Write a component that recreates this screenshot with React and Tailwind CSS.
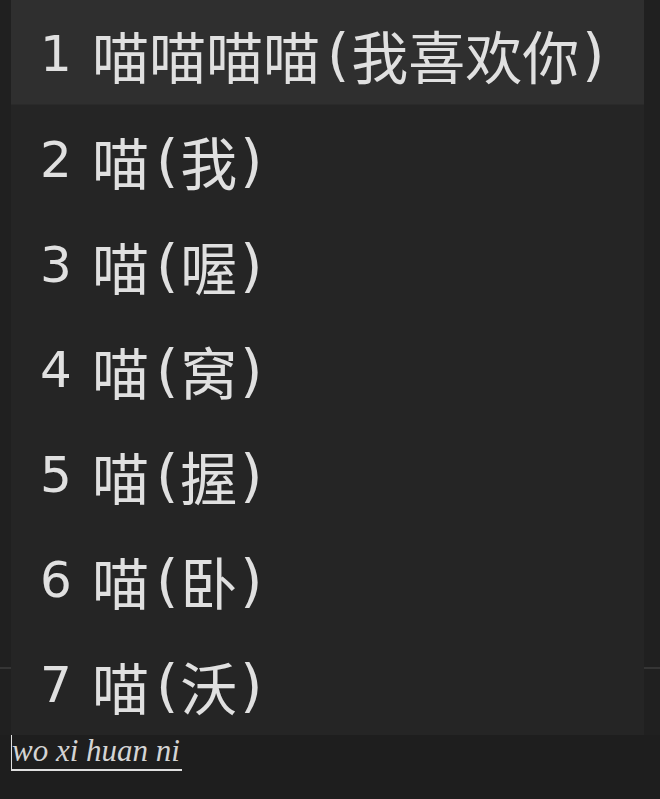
import React from "react";

const candidates = [
  { n: 1, head: "喵喵喵喵", hint: "我喜欢你" },
  { n: 2, head: "喵", hint: "我" },
  { n: 3, head: "喵", hint: "喔" },
  { n: 4, head: "喵", hint: "窝" },
  { n: 5, head: "喵", hint: "握" },
  { n: 6, head: "喵", hint: "卧" },
  { n: 7, head: "喵", hint: "沃" },
];

function SideStrip({ width }) {
  return (
    <div className={`${width} flex flex-col`}>
      <div className="h-[667px] bg-[#202020]" />
      <div className="h-[2px] bg-[#353535]" />
      <div className="flex-1 bg-[#202020]" />
    </div>
  );
}

function CandidateRow({ item, active }) {
  return (
    <div
      className={`h-[105px] flex items-center pl-[29px] pt-[5px] text-[#e0e0e0] ${
        active ? "bg-[#2f2f2f] border-b border-[#2a2a2a]" : "bg-[#252525]"
      }`}
    >
      <span className="w-[52px] text-[50px] font-['DejaVu_Sans',sans-serif]">{item.n}</span>
      <span className="text-[57px] leading-none font-['Noto_Sans_CJK_SC',sans-serif] flex items-center">
        {item.head}
        <span className="ml-[7px] mr-[2px] font-['DejaVu_Sans',sans-serif]">(</span>
        {item.hint}
        <span className="ml-[3px] font-['DejaVu_Sans',sans-serif]">)</span>
      </span>
    </div>
  );
}

export default function App() {
  return (
    <div className="w-[660px] h-[799px] bg-[#1e1e1e] overflow-hidden">
      {/* candidate window over the editor */}
      <div className="flex h-[735px]">
        <SideStrip width="w-[11px]" />
        <div className="w-[633px] flex flex-col">
          {candidates.map((c, i) => (
            <CandidateRow key={c.n} item={c} active={i === 0} />
          ))}
        </div>
        <SideStrip width="flex-1" />
      </div>

      {/* composition string */}
      <div className="pl-[11px]">
        <span className="inline-block border-l border-b-2 border-[#e0e0e0] h-[36px] pr-[2px] text-[31px] leading-[32px] italic text-[#d4d4d4] font-['Liberation_Serif',serif]">
          wo xi huan ni
        </span>
      </div>
    </div>
  );
}
